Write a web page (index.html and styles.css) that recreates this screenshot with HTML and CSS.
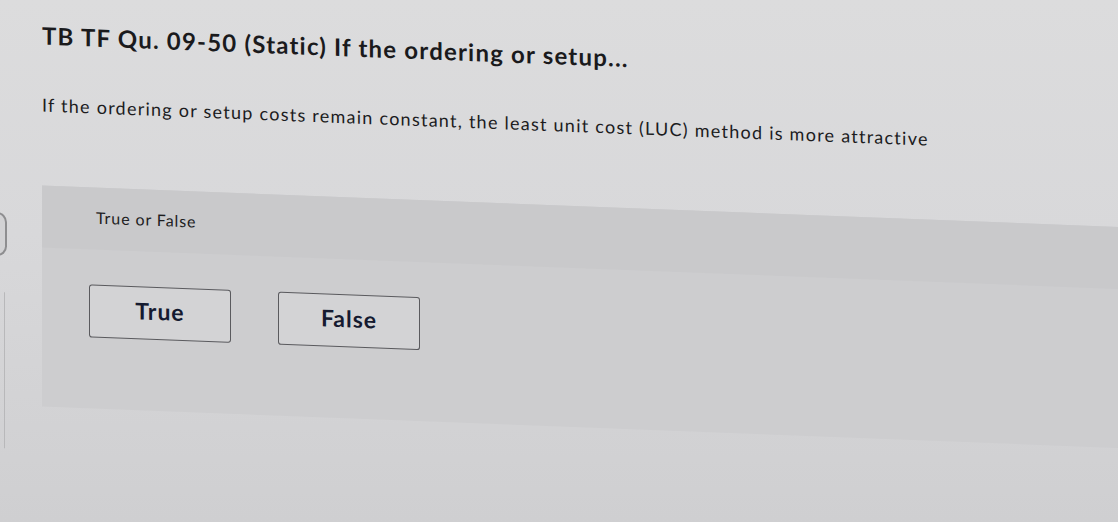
FILE: index.html
```html
<!DOCTYPE html>
<html lang="en">
<head>
<meta charset="utf-8">
<title>TB TF Qu. 09-50 (Static)</title>
<link rel="stylesheet" href="styles.css">
</head>
<body>
<div class="page">
  <div class="rail">
    <span class="rail-pill"></span>
    <span class="rail-line"></span>
  </div>
  <main class="content">
    <h1 class="title">TB TF Qu. 09-50 (Static) If the ordering or setup...</h1>
    <p class="question">If the ordering or setup costs remain constant, the least unit cost (LUC) method is more attractive</p>
    <section class="answer-box">
      <div class="answer-head">True or False</div>
      <div class="answer-body">
        <button class="choice" type="button">True</button>
        <button class="choice" type="button">False</button>
      </div>
    </section>
  </main>
</div>
</body>
</html>
```

FILE: styles.css
```css
html, body {
  margin: 0;
  padding: 0;
  width: 1118px;
  height: 522px;
  overflow: hidden;
}

body {
  background: linear-gradient(180deg, #dcdcdd 0%, #d8d8da 45%, #cfcfd1 100%);
  font-family: "Lato", "Open Sans", sans-serif;
  color: #1d1d1f;
}

.page {
  display: flex;
  transform: skewY(2.2deg);
  transform-origin: 0 0;
  width: 1118px;
}

.rail {
  width: 8px;
  flex: none;
  display: flex;
  flex-direction: column;
  align-items: flex-end;
  padding-top: 212px;
}

.rail-pill {
  display: block;
  width: 8px;
  height: 40px;
  margin-right: 1px;
  border: 2px solid #8e8e90;
  border-left: none;
  border-radius: 0 10px 10px 0;
  background: #d2d2d4;
}

.rail-line {
  display: block;
  width: 1px;
  height: 156px;
  margin-top: 36px;
  margin-right: 3px;
  background: #b8b8ba;
}

.content {
  flex: 1;
  min-width: 0;
  padding-left: 34px;
}

.title {
  margin: 19px 0 0;
  font-size: 24px;
  line-height: 30px;
  font-weight: 700;
  color: #1a1a1c;
  letter-spacing: 1.2px;
}

.question {
  margin: 42px 0 0;
  font-size: 18px;
  line-height: 24px;
  font-weight: 400;
  color: #1c1c1e;
  letter-spacing: 1.25px;
}

.answer-box {
  margin-top: 69px;
  height: 221px;
  background: #cdcdcf;
  display: flex;
  flex-direction: column;
}

.answer-head {
  height: 62px;
  box-sizing: border-box;
  padding: 20px 0 0 54px;
  background: #c9c9cb;
  font-size: 16px;
  line-height: 20px;
  color: #1d1d1f;
  letter-spacing: 0.9px;
}

.answer-body {
  display: flex;
  gap: 47px;
  padding: 35px 0 0 47px;
}

.choice {
  box-sizing: border-box;
  width: 142px;
  height: 53px;
  background: #d3d3d5;
  border: 1.5px solid #5a5a5e;
  border-radius: 3px;
  font-family: "Lato", "Open Sans", sans-serif;
  font-size: 23px;
  font-weight: 700;
  letter-spacing: 1px;
  line-height: 1;
  padding: 0 0 4px;
  color: #151a30;
  cursor: pointer;
}
```
